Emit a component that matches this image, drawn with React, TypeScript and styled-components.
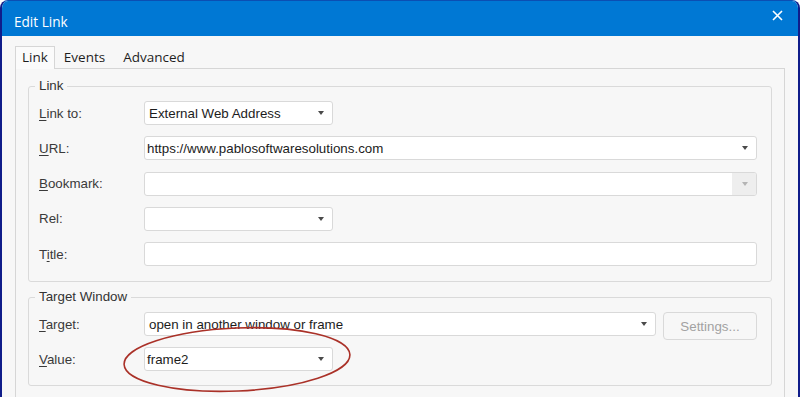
import React, { FC } from 'react';
import styled, { createGlobalStyle } from 'styled-components';

const GlobalStyle = createGlobalStyle`
  html, body {
    margin: 0;
    padding: 0;
    height: 397px;
    overflow: hidden;
    background: #ffffff;
  }
`;

const StyledWindow = styled.div`
  position: relative;
  box-sizing: border-box;
  width: 800px;
  height: 397px;
  display: flex;
  flex-direction: column;
  border: 2px solid #101d8a;
  border-top: 1px solid #0b4fb3;
  border-bottom: none;
  border-radius: 8px 8px 0 0;
  overflow: hidden;
  background: #f7f7f7;
`;

const StyledTitleBar = styled.div`
  height: 35px;
  flex-shrink: 0;
  display: flex;
  align-items: flex-start;
  background: #0078d4;
  color: #ffffff;
`;

const StyledTitle = styled.span`
  margin: 11px 0 0 12px;
  font-family: 'Open Sans', 'Noto Sans', sans-serif;
  font-size: 13.6px;
  line-height: 19px;
`;

const StyledClose = styled.svg`
  margin: 9px 15px 0 auto;
`;

const StyledBody = styled.div`
  flex: 1;
  display: flex;
  flex-direction: column;
  padding: 10px 13px 0;
`;

const StyledTabs = styled.div`
  display: flex;
  height: 22px;
`;

const StyledTab = styled.div<{ $active?: boolean }>`
  box-sizing: border-box;
  height: ${({ $active }) => ($active ? '23px' : '22px')};
  padding: ${({ $active }) => ($active ? '0 6px' : '0 8px')};
  margin-bottom: ${({ $active }) => ($active ? '-1px' : '0')};
  border: 1px solid ${({ $active }) => ($active ? '#d6d6d6' : 'transparent')};
  border-bottom: none;
  background: ${({ $active }) => ($active ? '#fbfbfb' : 'transparent')};
  position: relative;
  z-index: 1;
  font-family: 'Open Sans', 'Noto Sans', sans-serif;
  font-size: 13.5px;
  line-height: 21px;
  color: #1e1e1e;
`;

const StyledPanel = styled.div`
  flex: 1;
  display: flex;
  flex-direction: column;
  gap: 7px;
  padding: 9px 12px 0;
  border: 1px solid #d6d6d6;
  border-bottom: none;
  background: #f7f7f7;
`;

const StyledGroup = styled.fieldset<{ $gap?: number; $bottom?: number }>`
  margin: 0;
  min-width: 0;
  padding: 7px 14px ${({ $bottom = 14 }) => $bottom}px 10px;
  border: 1px solid #dadada;
  border-radius: 3px;
  display: flex;
  flex-direction: column;
  gap: ${({ $gap = 11 }) => $gap}px;
`;

const StyledLegend = styled.legend`
  margin-left: -4px;
  padding: 0 4px;
  font-family: 'Liberation Sans', Arial, sans-serif;
  font-size: 13.33px;
  line-height: 16px;
  color: #333333;
`;

const StyledRow = styled.div`
  display: flex;
  align-items: center;
  height: 24px;
`;

const StyledLabel = styled.label`
  width: 105px;
  flex-shrink: 0;
  font-family: 'Liberation Sans', Arial, sans-serif;
  font-size: 13.33px;
  color: #3a3a3a;
`;

const StyledKey = styled.span`
  text-decoration: underline;
  text-underline-offset: 2px;
`;

const StyledField = styled.div<{ $width?: number; $editable?: boolean }>`
  box-sizing: border-box;
  ${({ $width }) => ($width ? `width: ${$width}px;` : 'flex: 1;')}
  height: 24px;
  display: flex;
  align-items: center;
  padding-left: ${({ $editable }) => ($editable ? '2px' : '4px')};
  border: 1px solid #d9d9d9;
  border-radius: 3px;
  background: #ffffff;
  overflow: hidden;
  font-family: 'Liberation Sans', Arial, sans-serif;
  font-size: 13.33px;
  color: #1c1c1c;
  white-space: nowrap;
`;

const StyledValue = styled.span`
  flex: 1;
`;

const StyledArrow = styled.span<{ $disabled?: boolean }>`
  width: 24px;
  height: 100%;
  flex-shrink: 0;
  display: flex;
  align-items: center;
  justify-content: center;
  background: ${({ $disabled }) => ($disabled ? '#eeeeee' : 'transparent')};

  &::after {
    content: '';
    border-left: 3.5px solid transparent;
    border-right: 3.5px solid transparent;
    border-top: 4px solid ${({ $disabled }) => ($disabled ? '#b4b4b4' : '#4a4a4a')};
    margin-left: 2px;
  }
`;

const StyledButton = styled.div`
  box-sizing: border-box;
  align-self: flex-start;
  width: 94px;
  height: 28px;
  margin-left: 7px;
  display: flex;
  align-items: center;
  justify-content: center;
  border: 1px solid #d9d9d9;
  border-radius: 4px;
  background: #f7f7f7;
  font-family: 'Liberation Sans', Arial, sans-serif;
  font-size: 13.33px;
  color: #a2a2a2;
`;

const StyledMark = styled.svg`
  position: absolute;
  left: 117px;
  top: 322px;
  pointer-events: none;
`;

type ComboProps = {
  value?: string;
  width?: number;
  editable?: boolean;
  disabled?: boolean;
  arrow?: boolean;
};

const Combo: FC<ComboProps> = ({ value = '', width, editable, disabled, arrow = true }) => (
  <StyledField $width={width} $editable={editable}>
    <StyledValue>{value}</StyledValue>
    {arrow && <StyledArrow $disabled={disabled} />}
  </StyledField>
);

const Label: FC<{ before?: string; k?: string; after: string }> = ({ before = '', k = '', after }) => (
  <StyledLabel>
    {before}
    {k && <StyledKey>{k}</StyledKey>}
    {after}
  </StyledLabel>
);

const App: FC = () => (
  <>
    <GlobalStyle />
    <StyledWindow>
      <StyledTitleBar>
        <StyledTitle>Edit Link</StyledTitle>
        <StyledClose width="11" height="11" viewBox="0 0 11 11">
          <path d="M1 1 L10 10 M10 1 L1 10" stroke="#ffffff" strokeWidth="1.6" fill="none" />
        </StyledClose>
      </StyledTitleBar>
      <StyledBody>
        <StyledTabs>
          <StyledTab $active>Link</StyledTab>
          <StyledTab>Events</StyledTab>
          <StyledTab>Advanced</StyledTab>
        </StyledTabs>
        <StyledPanel>
          <StyledGroup $gap={11.25} $bottom={15}>
            <StyledLegend>Link</StyledLegend>
            <StyledRow>
              <Label k="L" after="ink to:" />
              <Combo value="External Web Address" width={189} />
            </StyledRow>
            <StyledRow>
              <Label k="U" after="RL:" />
              <Combo value="https://www.pablosoftwaresolutions.com" editable />
            </StyledRow>
            <StyledRow>
              <Label k="B" after="ookmark:" />
              <Combo editable disabled />
            </StyledRow>
            <StyledRow>
              <Label after="Rel:" />
              <Combo width={189} editable />
            </StyledRow>
            <StyledRow>
              <Label before="T" k="i" after="tle:" />
              <Combo editable arrow={false} />
            </StyledRow>
          </StyledGroup>
          <StyledGroup>
            <StyledLegend>Target Window</StyledLegend>
            <StyledRow>
              <Label k="T" after="arget:" />
              <Combo value="open in another window or frame" width={512} />
              <StyledButton>Settings...</StyledButton>
            </StyledRow>
            <StyledRow>
              <Label k="V" after="alue:" />
              <Combo value="frame2" width={189} editable />
            </StyledRow>
          </StyledGroup>
        </StyledPanel>
      </StyledBody>
      <StyledMark width="240" height="74" viewBox="0 0 240 74">
        <ellipse
          cx="118"
          cy="36.5"
          rx="113"
          ry="31.5"
          transform="rotate(-2.5 118 36.5)"
          fill="none"
          stroke="#aa3128"
          strokeWidth="1.6"
        />
      </StyledMark>
    </StyledWindow>
  </>
);

export default App;
